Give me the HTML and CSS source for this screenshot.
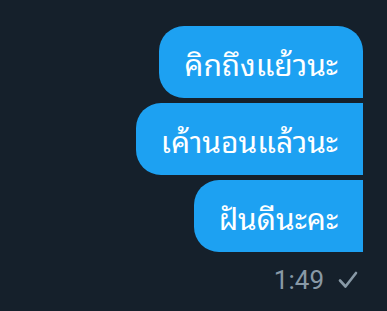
FILE: index.html
```html
<!DOCTYPE html>
<html lang="th">
<head>
<meta charset="utf-8">
<link rel="stylesheet" href="styles.css">
</head>
<body>
<div class="chat">
  <div class="bubble first">คิกถึงแย้วนะ</div>
  <div class="bubble">เค้านอนแล้วนะ</div>
  <div class="bubble">ฝันดีนะคะ</div>
  <div class="meta">
    <span class="time">1:49</span>
    <svg class="check" width="20" height="18" viewBox="0 0 20 18"><path d="M2 9.5 L7.5 15.5 L18 2" fill="none" stroke="#8899a6" stroke-width="2.6" stroke-linecap="round" stroke-linejoin="round"/></svg>
  </div>
</div>
</body>
</html>
```
FILE: styles.css
```css
html, body {
  margin: 0;
  padding: 0;
  background: #15202b;
}
.chat {
  display: flex;
  flex-direction: column;
  align-items: flex-end;
  gap: 5px;
  padding: 26px 24px 0 0;
  font-family: "Noto Sans Thai Looped", Loma, "Noto Sans", sans-serif;
}
.bubble {
  height: 72px;
  display: flex;
  align-items: center;
  padding: 0 25px;
  background: #1da1f2;
  color: #fff;
  font-size: 30px;
  font-weight: 380;
  border-radius: 25px 0 0 25px;
  box-sizing: border-box;
}
.bubble.first {
  border-top-right-radius: 25px;
}
.meta {
  display: flex;
  align-items: center;
  gap: 14px;
  margin-top: 8px;
  padding-right: 5px;
  color: #8899a6;
  font-family: Roboto, "Liberation Sans", sans-serif;
  font-size: 26px;
  line-height: 30px;
}
.check {
  display: block;
}
```
